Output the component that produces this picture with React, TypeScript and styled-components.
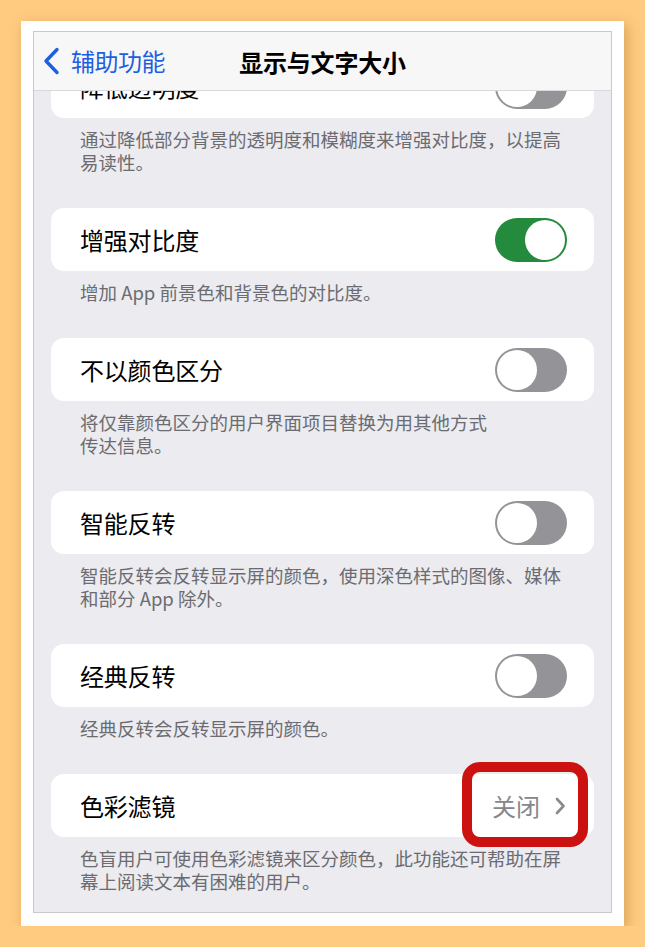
import styled, { createGlobalStyle } from 'styled-components';

const GlobalStyle = createGlobalStyle`
  html, body {
    margin: 0;
    padding: 0;
    background: #FFCB80;
  }
  body {
    padding: 21px 0 0 21px;
    font-family: "Noto Sans CJK SC", "Noto Sans", sans-serif;
  }
  * {
    box-sizing: border-box;
  }
`;

interface SettingItem {
  label: string;
  lines: string[];
  toggle?: boolean;
  value?: string;
}

const items: SettingItem[] = [
  { label: '降低透明度', toggle: false, lines: ['通过降低部分背景的透明度和模糊度来增强对比度，以提高', '易读性。'] },
  { label: '增强对比度', toggle: true, lines: ['增加 App 前景色和背景色的对比度。'] },
  { label: '不以颜色区分', toggle: false, lines: ['将仅靠颜色区分的用户界面项目替换为用其他方式', '传达信息。'] },
  { label: '智能反转', toggle: false, lines: ['智能反转会反转显示屏的颜色，使用深色样式的图像、媒体', '和部分 App 除外。'] },
  { label: '经典反转', toggle: false, lines: ['经典反转会反转显示屏的颜色。'] },
  { label: '色彩滤镜', value: '关闭', lines: ['色盲用户可使用色彩滤镜来区分颜色，此功能还可帮助在屏', '幕上阅读文本有困难的用户。'] },
];

export default function App() {
  return (
    <>
      <GlobalStyle />
      <Frame>
        <Screen>
          <NavBar>
            <BackButton>
              <svg width="18" height="28" viewBox="0 0 18 28" fill="none">
                <path d="M15 2.5 L4 14 L15 25.5" stroke="#1E5FE0" strokeWidth="3.4" strokeLinecap="round" strokeLinejoin="round" />
              </svg>
              <BackLabel>辅助功能</BackLabel>
            </BackButton>
            <Title>显示与文字大小</Title>
            <span />
          </NavBar>
          <Content>
            {items.map((item, index) => (
              <Group key={item.label} $first={index === 0}>
                <Card>
                  <Label>{item.label}</Label>
                  {item.toggle !== undefined && <Toggle $on={item.toggle} />}
                  {item.value && (
                    <Accessory>
                      <Value>{item.value}</Value>
                      <svg width="12" height="20" viewBox="0 0 12 20" fill="none">
                        <path d="M3 3 L9.5 10 L3 17" stroke="#8A8A8E" strokeWidth="2.6" strokeLinecap="round" strokeLinejoin="round" />
                      </svg>
                      <Highlight />
                    </Accessory>
                  )}
                </Card>
                <Footnote>
                  {item.lines.map(line => (
                    <FootLine key={line}>{line}</FootLine>
                  ))}
                </Footnote>
              </Group>
            ))}
          </Content>
        </Screen>
      </Frame>
    </>
  );
}

const Frame = styled.div`
  width: 603px;
  height: 905px;
  padding: 10px 12px 13px 12px;
  background: #FFFFFF;
  box-shadow: 3px 4px 12px rgba(140, 90, 20, 0.35);
`

const Screen = styled.div`
  width: 100%;
  height: 100%;
  display: flex;
  flex-direction: column;
  border: 1px solid #C9C9CC;
  background: #EBEBF0;
  overflow: hidden;
`

const NavBar = styled.div`
  height: 59px;
  flex-shrink: 0;
  display: grid;
  grid-template-columns: 1fr auto 1fr;
  align-items: center;
  padding: 0 8px;
  background: #F7F7F8;
  border-bottom: 1px solid #D9D9DC;
  position: relative;
  z-index: 1;
`

const BackButton = styled.div`
  display: flex;
  align-items: center;
  gap: 11px;
  color: #1E5FE0;
`

const BackLabel = styled.span`
  font-size: 24px;
  line-height: 1;
  letter-spacing: -0.5px;
`

const Title = styled.div`
  font-size: 24px;
  font-weight: 700;
  color: #000000;
  letter-spacing: -0.2px;
`

const Content = styled.div`
  flex: 1;
  overflow: hidden;
  padding: 0 17px;
  display: flex;
  flex-direction: column;
`

const Group = styled.div<{ $first: boolean }>`
  margin-top: ${props => (props.$first ? '-36px' : '0')};
  display: flex;
  flex-direction: column;
`

const Card = styled.div`
  height: 63px;
  display: flex;
  align-items: center;
  justify-content: space-between;
  padding: 0 27px 0 29px;
  background: #FFFFFF;
  border-radius: 13px;
`

const Label = styled.div`
  font-size: 24px;
  color: #000000;
  letter-spacing: -0.2px;
`

const Toggle = styled.div<{ $on: boolean }>`
  width: 72px;
  height: 44px;
  border-radius: 22px;
  background: ${props => (props.$on ? '#248A3D' : '#939398')};
  position: relative;

  &::after {
    content: '';
    position: absolute;
    top: 2px;
    left: ${props => (props.$on ? '30px' : '2px')};
    width: 40px;
    height: 40px;
    border-radius: 50%;
    background: #FFFFFF;
  }
`

const Accessory = styled.div`
  position: relative;
  height: 24px;
  display: flex;
  align-items: center;
  gap: 14px;
  margin-right: 1px;
`

const Value = styled.span`
  font-size: 24px;
  line-height: 24px;
  color: #87878B;
`

const Highlight = styled.div`
  position: absolute;
  left: -30px;
  right: -22px;
  top: -32px;
  bottom: -29px;
  border: 10px solid #CC1111;
  border-radius: 18px;
  pointer-events: none;
`

const Footnote = styled.div`
  padding: 10px 0 34px 29px;
  color: #6C6C70;
  font-size: 18.5px;
  line-height: 23px;
`

const FootLine = styled.div`
  white-space: nowrap;
`
